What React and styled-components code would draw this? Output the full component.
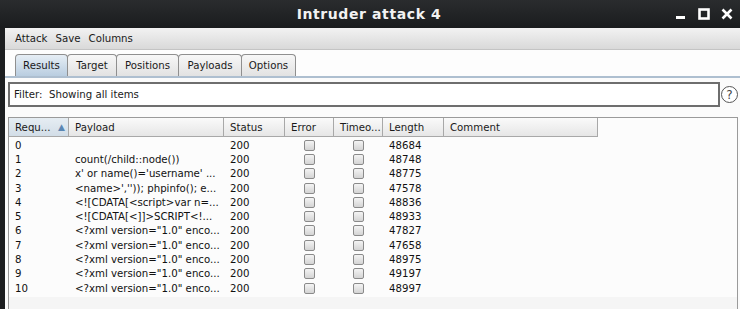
import React from "react";
import styled, { createGlobalStyle } from "styled-components";

const GlobalStyle = createGlobalStyle`
  html, body {
    margin: 0;
    padding: 0;
    background: #1c1e20;
  }
  * {
    box-sizing: border-box;
  }
`;

const font = `"DejaVu Sans", "Liberation Sans", sans-serif`;
const textSize = "10.2px";

const tabs = ["Results", "Target", "Positions", "Payloads", "Options"];
const tabWidths = [53, 50, 63, 64, 55];

const columns = [
  { title: "Requ...", width: 60, sorted: true },
  { title: "Payload", width: 155 },
  { title: "Status", width: 61 },
  { title: "Error", width: 49 },
  { title: "Timeo...", width: 49 },
  { title: "Length", width: 61 },
  { title: "Comment", width: 154 },
];

const rows = [
  ["0", "", "48684"],
  ["1", "count(/child::node())", "48748"],
  ["2", "x' or name()='username' ...", "48775"],
  ["3", "<name>','')); phpinfo(); e...", "47578"],
  ["4", "<![CDATA[<script>var n=...", "48836"],
  ["5", "<![CDATA[<]]>SCRIPT<!...", "48933"],
  ["6", '<?xml version="1.0" enco...', "47827"],
  ["7", '<?xml version="1.0" enco...', "47658"],
  ["8", '<?xml version="1.0" enco...', "48975"],
  ["9", '<?xml version="1.0" enco...', "49197"],
  ["10", '<?xml version="1.0" enco...', "48997"],
];

const App = () => {
  return (
    <Window>
      <GlobalStyle />
      <TitleBar>
        <Title>Intruder attack 4</Title>
        <Controls>
          <svg width="12" height="12" viewBox="0 0 12 12">
            <rect x="1" y="8" width="9" height="3" fill="#fff" />
          </svg>
          <svg width="12" height="12" viewBox="0 0 12 12">
            <rect x="1.5" y="1.5" width="9" height="9" fill="none" stroke="#fff" strokeWidth="2.6" />
          </svg>
          <svg width="12" height="12" viewBox="0 0 12 12">
            <path d="M1.5 1.5 L10.5 10.5 M10.5 1.5 L1.5 10.5" stroke="#fff" strokeWidth="2.6" />
          </svg>
        </Controls>
      </TitleBar>
      <Body>
        <MenuBar>
          <MenuItem>Attack</MenuItem>
          <MenuItem>Save</MenuItem>
          <MenuItem>Columns</MenuItem>
        </MenuBar>
        <TabStrip>
          {tabs.map((t, i) => (
            <Tab key={t} $active={i === 0} $width={tabWidths[i]}>
              {t}
            </Tab>
          ))}
        </TabStrip>
        <FilterRow>
          <FilterBox>Filter:&nbsp; Showing all items</FilterBox>
          <HelpIcon>?</HelpIcon>
        </FilterRow>
        <TableArea>
          <HeaderRow>
            {columns.map((c) => (
              <HeaderCell key={c.title} $width={c.width} $sorted={c.sorted}>
                {c.title}
                {c.sorted && <SortArrow>▲</SortArrow>}
              </HeaderCell>
            ))}
          </HeaderRow>
          <Rows>
            {rows.map((r) => (
              <Row key={r[0]}>
                <Cell $width={60}>{r[0]}</Cell>
                <Cell $width={155}>{r[1]}</Cell>
                <Cell $width={61}>200</Cell>
                <Cell $width={49} $center>
                  <Check />
                </Cell>
                <Cell $width={49} $center>
                  <Check />
                </Cell>
                <Cell $width={61}>{r[2]}</Cell>
                <Cell $width={154} />
              </Row>
            ))}
          </Rows>
        </TableArea>
      </Body>
    </Window>
  );
};

export default App;

const Window = styled.div`
  width: 740px;
  height: 309px;
  display: flex;
  flex-direction: column;
  background: #1c1e20;
  overflow: hidden;
  font-family: ${font};
`;

const TitleBar = styled.div`
  height: 28px;
  flex: none;
  position: relative;
  display: flex;
  align-items: center;
  justify-content: center;
  background: linear-gradient(#2a2c2e, #1a1c1e);
`;

const Title = styled.div`
  color: #f2f2f2;
  font-weight: bold;
  font-size: 14px;
  letter-spacing: 0.6px;
  padding-right: 2px;
`;

const Controls = styled.div`
  position: absolute;
  right: 7px;
  top: 8px;
  display: flex;
  gap: 11px;
`;

const Body = styled.div`
  flex: 1;
  margin-left: 5px;
  display: flex;
  flex-direction: column;
  background: #fbfbfb;
  min-height: 0;
`;

const MenuBar = styled.div`
  height: 22px;
  flex: none;
  display: flex;
  align-items: center;
  gap: 8px;
  padding-left: 10px;
  background: linear-gradient(#f2f2f2, #d9d9d9);
  border-bottom: 1px solid #c4c4c4;
  font-size: ${textSize};
  color: #1a1a1a;
`;

const MenuItem = styled.span``;

const TabStrip = styled.div`
  height: 28px;
  flex: none;
  display: flex;
  align-items: flex-end;
  padding-left: 10px;
  background: #fdfdfd;
  border-bottom: 2px solid #aebfd0;
`;

const Tab = styled.div`
  width: ${(p) => p.$width}px;
  height: 22px;
  display: flex;
  align-items: center;
  justify-content: center;
  font-size: ${textSize};
  color: #1a1a1a;
  border: 1px solid #8f8f8f;
  border-bottom: none;
  border-radius: 4px 4px 0 0;
  margin-right: -1px;
  background: ${(p) =>
    p.$active
      ? "linear-gradient(#e6eef5, #b9cde0)"
      : "linear-gradient(#f7f7f7, #e2e2e2)"};
`;

const FilterRow = styled.div`
  flex: none;
  display: flex;
  align-items: center;
  padding: 4px 0 0 3px;
  gap: 1px;
`;

const FilterBox = styled.div`
  width: 712px;
  height: 25px;
  border: 2px solid #6e6e6e;
  background: #fff;
  display: flex;
  align-items: center;
  padding-left: 4px;
  font-size: ${textSize};
  color: #1a1a1a;
`;

const HelpIcon = styled.div`
  width: 17px;
  height: 17px;
  border-radius: 50%;
  border: 1.5px solid #555;
  display: flex;
  align-items: center;
  justify-content: center;
  font-size: 12px;
  color: #444;
  background: #fff;
`;

const TableArea = styled.div`
  margin: 10px 2px 0 3px;
  flex: 1;
  border: 1px solid #9a9a9a;
  border-bottom: none;
  background: #f5f5f5;
  min-height: 0;
`;

const HeaderRow = styled.div`
  display: flex;
  height: 19px;
  background: #fcfcfc;
`;

const HeaderCell = styled.div`
  width: ${(p) => p.$width}px;
  flex: none;
  display: flex;
  align-items: center;
  padding-left: 6px;
  font-size: ${textSize};
  color: #1a1a1a;
  border-right: 1px solid #a8a8a8;
  border-bottom: 1px solid #a8a8a8;
  background: ${(p) =>
    p.$sorted
      ? "linear-gradient(#e6edf3, #d2dde7)"
      : "linear-gradient(#fafafa, #e6e6e6)"};
`;

const SortArrow = styled.span`
  margin-left: auto;
  margin-right: 3px;
  font-size: 9px;
  color: #5a86b3;
`;

const Rows = styled.div`
  padding: 1px 0 2px;
  display: flex;
  flex-direction: column;
  background: #fcfcfc;
`;

const Row = styled.div`
  display: flex;
  height: 14.3px;
  align-items: center;
`;

const Cell = styled.div`
  width: ${(p) => p.$width}px;
  flex: none;
  display: flex;
  align-items: center;
  justify-content: ${(p) => (p.$center ? "center" : "flex-start")};
  padding-left: ${(p) => (p.$center ? 0 : 6)}px;
  font-size: ${textSize};
  color: #111;
  white-space: nowrap;
  overflow: hidden;
`;

const Check = styled.span`
  width: 11px;
  height: 11px;
  border: 1px solid #8a8a8a;
  border-radius: 2px;
  background: linear-gradient(#f4f4f4, #d4d4d4);
`;
